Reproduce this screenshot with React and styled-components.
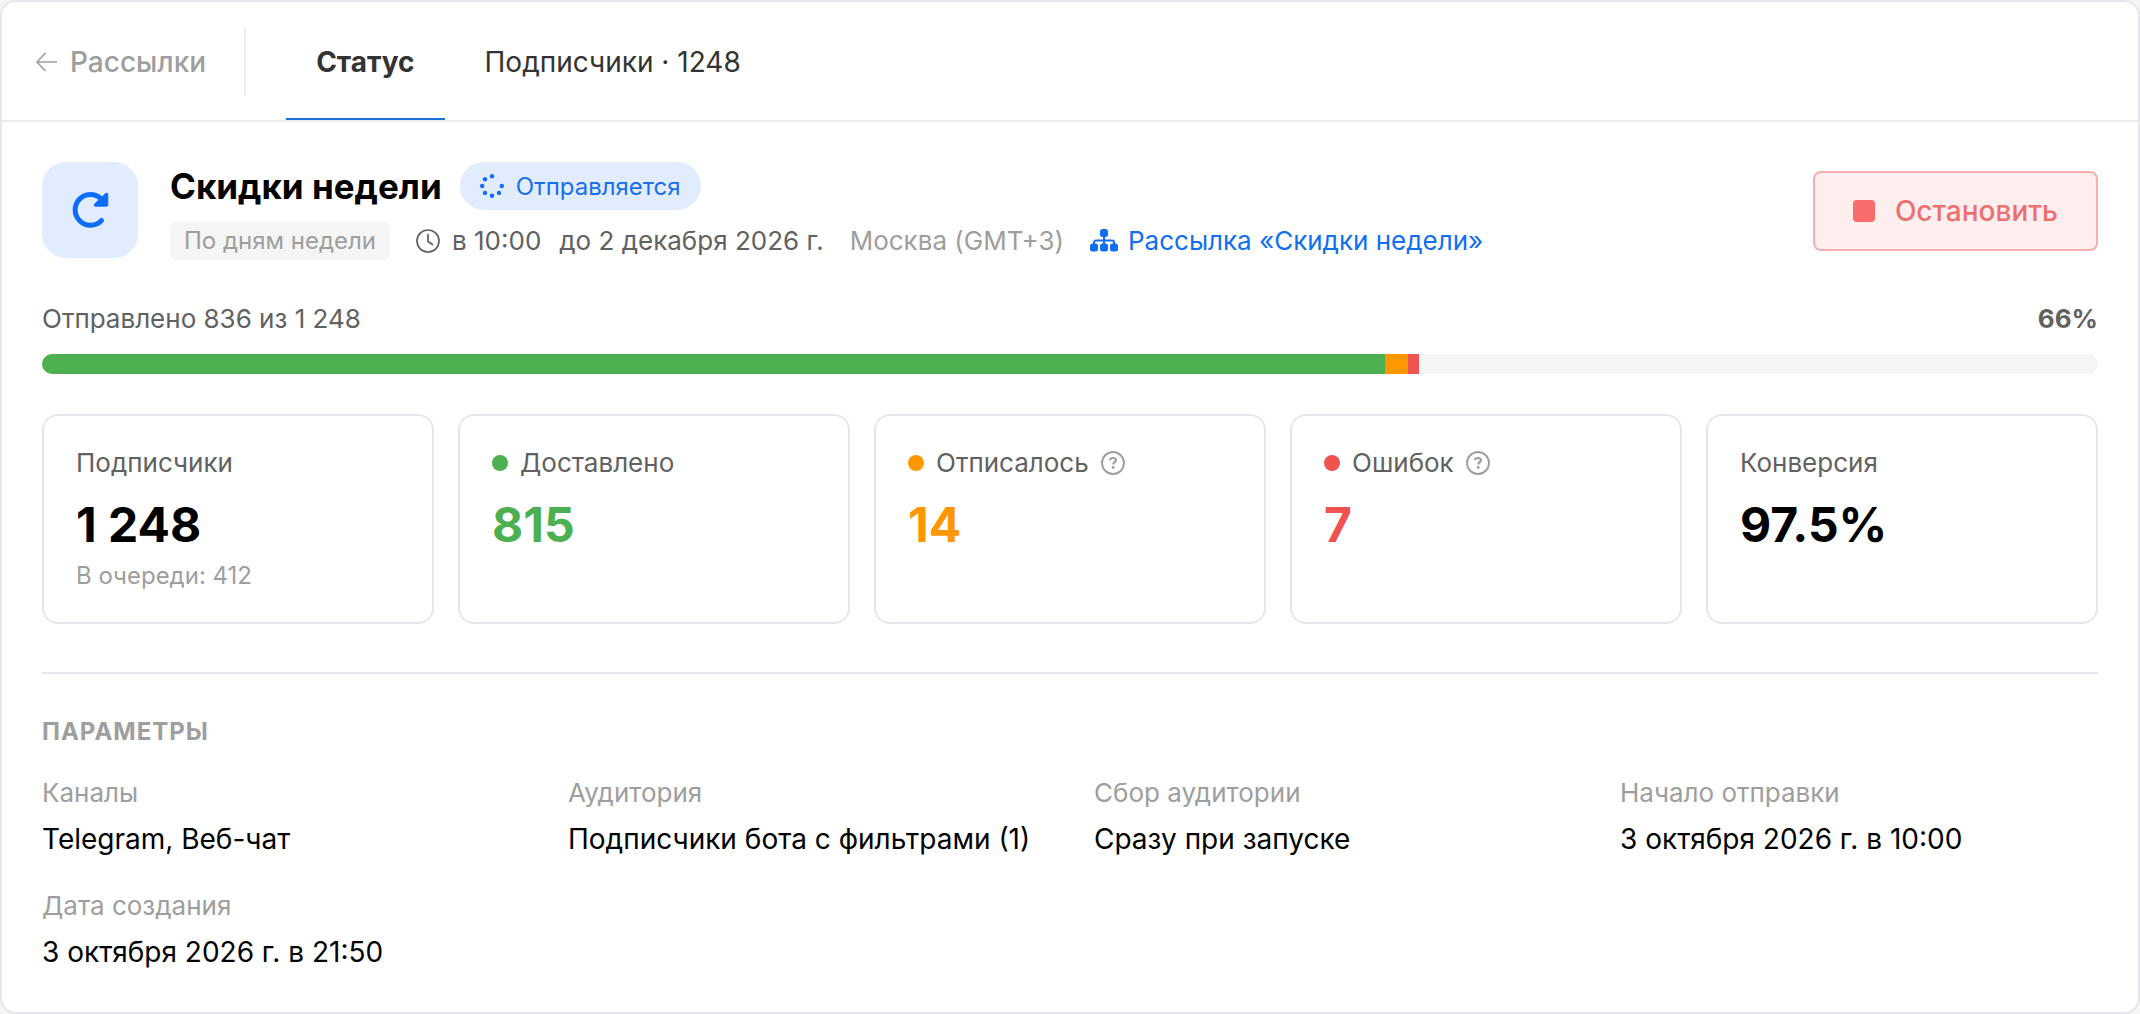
import { useState } from "react";
import styled, { createGlobalStyle } from "styled-components";

const GlobalStyle = createGlobalStyle`
  * {
    box-sizing: border-box;
  }
  body {
    margin: 0;
    background: #f5f5f7;
    font-family: Inter, "Liberation Sans", sans-serif;
    color: #000;
  }
`;

const Panel = styled.main`
  min-height: 100vh;
  background: #fff;
  border: 2px solid #e6e6ee;
  border-radius: 16px;
`;

const Header = styled.header`
  display: flex;
  align-items: stretch;
  height: 120px;
  border-bottom: 2px solid #ededf0;
`;

const BackLink = styled.a`
  display: flex;
  align-items: center;
  gap: 12px;
  margin: 26px 0 24px;
  padding: 0 38px 0 32px;
  border-right: 2px solid #ececf0;
  font-size: 28px;
  font-weight: 500;
  color: #9e9e9e;
  text-decoration: none;
`;

const Tabs = styled.nav`
  display: flex;
  gap: 10px;
  margin-left: 40px;
`;

const Tab = styled.button`
  padding: 4px 30px 0;
  border: none;
  border-bottom: 2px solid ${(props) => (props.$active ? "#1f6fd8" : "transparent")};
  background: none;
  font-family: inherit;
  font-size: 28px;
  font-weight: ${(props) => (props.$active ? 700 : 400)};
  color: #333;
  cursor: pointer;
`;

const Content = styled.div`
  padding: 40px 40px 0;
`;

const Summary = styled.section`
  display: flex;
  align-items: center;
  gap: 32px;
`;

const SummaryIcon = styled.div`
  display: flex;
  align-items: center;
  justify-content: center;
  align-self: flex-start;
  width: 96px;
  height: 96px;
  border-radius: 24px;
  background: #e1edff;
`;

const SummaryText = styled.div`
  display: flex;
  flex: 1;
  flex-direction: column;
  gap: 12px;
`;

const TitleRow = styled.div`
  display: flex;
  align-items: center;
  gap: 18px;
`;

const Title = styled.h1`
  margin: 0;
  font-size: 35px;
  line-height: 48px;
  font-weight: 700;
`;

const StatusBadge = styled.span`
  display: flex;
  align-items: center;
  gap: 12px;
  height: 48px;
  padding: 0 20px;
  border-radius: 24px;
  background: #e1edff;
  font-size: 24px;
  color: #1a6fe8;
`;

const MetaRow = styled.div`
  display: flex;
  align-items: center;
  gap: 26px;
  font-size: 26px;
  line-height: 38px;
  color: #616161;
`;

const Chip = styled.span`
  padding: 0 14px;
  border-radius: 6px;
  background: #f5f5f5;
  font-size: 24px;
  color: #9e9e9e;
`;

const Schedule = styled.span`
  display: flex;
  align-items: center;
  gap: 12px;
`;

const Until = styled.span`
  margin-left: 6px;
`;

const Timezone = styled.span`
  color: #9e9e9e;
`;

const FlowLink = styled.a`
  display: flex;
  align-items: center;
  gap: 10px;
  color: #0f6ff0;
  text-decoration: none;
`;

const StopButton = styled.button`
  display: flex;
  align-items: center;
  gap: 20px;
  height: 80px;
  padding: 0 38px;
  border: 2px solid #f4b0b0;
  border-radius: 8px;
  background: #ffeeee;
  font-family: inherit;
  font-size: 28px;
  font-weight: 500;
  color: #ec7070;
  cursor: pointer;
`;

const StopSquare = styled.span`
  width: 22px;
  height: 22px;
  border-radius: 4px;
  background: #f96b6b;
`;

const ProgressHead = styled.div`
  display: flex;
  justify-content: space-between;
  margin: 40px 0 16px;
  font-size: 26px;
  line-height: 38px;
  color: #616161;
`;

const Percent = styled.span`
  font-weight: 700;
`;

const ProgressTrack = styled.div`
  display: flex;
  height: 20px;
  border-radius: 10px;
  background: #f5f5f5;
  overflow: hidden;
`;

const ProgressPart = styled.div`
  background: ${(props) => props.$color};
`;

const Cards = styled.section`
  display: grid;
  grid-template-columns: repeat(5, 1fr);
  gap: 24px;
  margin-top: 40px;
`;

const Card = styled.article`
  min-height: 210px;
  padding: 28px 32px;
  border: 2px solid #e6e6ee;
  border-radius: 16px;
`;

const CardLabel = styled.div`
  display: flex;
  align-items: center;
  gap: 12px;
  font-size: 26px;
  line-height: 38px;
  color: #616161;
`;

const Dot = styled.span`
  width: 16px;
  height: 16px;
  border-radius: 50%;
  background: ${(props) => props.$color};
`;

const CardValue = styled.div`
  margin-top: 12px;
  font-size: 48px;
  line-height: 62px;
  font-weight: 700;
  color: ${(props) => props.$color || "#000"};
`;

const CardNote = styled.div`
  margin-top: 2px;
  font-size: 24px;
  line-height: 36px;
  color: #9e9e9e;
`;

const Params = styled.section`
  margin-top: 48px;
  padding-top: 40px;
  border-top: 2px solid #e6e6ee;
`;

const ParamsTitle = styled.h2`
  margin: 0 0 24px;
  font-size: 24px;
  line-height: 36px;
  font-weight: 700;
  letter-spacing: 1px;
  color: #9e9e9e;
  text-transform: uppercase;
`;

const ParamsGrid = styled.dl`
  display: grid;
  grid-template-columns: repeat(4, 1fr);
  gap: 28px 48px;
  margin: 0 0 40px;
`;

const ParamName = styled.dt`
  font-size: 26px;
  line-height: 38px;
  color: #9e9e9e;
`;

const ParamValue = styled.dd`
  margin: 7px 0 0;
  font-size: 28px;
  line-height: 40px;
`;

const BackIcon = () => (
  <svg width="24" height="24" viewBox="0 0 24 24" fill="none" stroke="currentColor" strokeWidth="1.6">
    <path d="M23 12H3M11.5 3 3 12l8.500 9" />
  </svg>
);

const RepeatIcon = () => (
  <svg width="40" height="40" viewBox="0 0 40 40" fill="none" stroke="#0d6efd">
    <path d="M31.500 30.500A15.300 15.300 0 1 1 31 8.800" strokeWidth="5" strokeLinecap="round" />
    <path d="M36.500 4.500v10.500h-11z" fill="#0d6efd" strokeWidth="3.500" strokeLinejoin="round" />
  </svg>
);

const SpinnerIcon = () => (
  <svg width="24" height="24" viewBox="0 0 24 24" fill="#0d6efd">
    <circle cx="12" cy="2.200" r="2.200" />
    <circle cx="5" cy="5.200" r="2.200" />
    <circle cx="2.200" cy="12" r="2.200" />
    <circle cx="5" cy="18.900" r="2.200" />
    <circle cx="12" cy="21.800" r="2.200" />
    <circle cx="19" cy="18.900" r="2.200" />
    <circle cx="21.800" cy="12" r="2.200" />
  </svg>
);

const ClockIcon = () => (
  <svg width="24" height="24" viewBox="0 0 24 24" fill="none" stroke="currentColor" strokeWidth="1.700">
    <circle cx="12" cy="12" r="11" />
    <path d="M12 5.500v7l4.500 3" strokeLinecap="round" />
  </svg>
);

const FlowIcon = () => (
  <svg width="28" height="24" viewBox="0 0 28 24" fill="currentColor">
    <rect x="10" y="0" width="8" height="8" rx="2.500" />
    <rect x="0" y="14.500" width="8" height="8" rx="2.500" />
    <rect x="10" y="14.500" width="8" height="8" rx="2.500" />
    <rect x="20" y="14.500" width="8" height="8" rx="2.500" />
    <path
      d="M14 7v9M4 16v-2.500a2 2 0 0 1 2-2h16a2 2 0 0 1 2 2V16"
      fill="none"
      stroke="currentColor"
      strokeWidth="2"
    />
  </svg>
);

const HelpIcon = () => (
  <svg width="24" height="24" viewBox="0 0 24 24" fill="none" stroke="#9e9e9e">
    <circle cx="12" cy="12" r="11" strokeWidth="1.900" />
    <path d="M9 9.300C9.200 6.300 15 6.200 15 9.200c0 2-2.800 2-2.800 4.200" strokeWidth="2.100" />
    <circle cx="12.200" cy="16.500" r="1.400" fill="#9e9e9e" stroke="none" />
  </svg>
);

const progress = [
  { color: "#4caf50", value: 815 },
  { color: "#ff9800", value: 14 },
  { color: "#ef5350", value: 7 },
];
const total = 1248;

const cards = [
  { label: "Подписчики", value: "1 248", note: "В очереди: 412" },
  { label: "Доставлено", value: "815", color: "#4caf50" },
  { label: "Отписалось", value: "14", color: "#ff9800", help: true },
  { label: "Ошибок", value: "7", color: "#ef5350", help: true },
  { label: "Конверсия", value: "97.5%" },
];

const params = [
  ["Каналы", "Telegram, Веб-чат"],
  ["Аудитория", "Подписчики бота с фильтрами (1)"],
  ["Сбор аудитории", "Сразу при запуске"],
  ["Начало отправки", "3 октября 2026 г. в 10:00"],
  ["Дата создания", "3 октября 2026 г. в 21:50"],
];

function App() {
  const [tab, setTab] = useState("status");

  return (
    <>
      <GlobalStyle />
      <Panel>
        <Header>
          <BackLink href="#">
            <BackIcon />
            Рассылки
          </BackLink>
          <Tabs>
            <Tab $active={tab === "status"} onClick={() => setTab("status")}>
              Статус
            </Tab>
            <Tab $active={tab === "subscribers"} onClick={() => setTab("subscribers")}>
              Подписчики · 1248
            </Tab>
          </Tabs>
        </Header>

        <Content>
          <Summary>
            <SummaryIcon>
              <RepeatIcon />
            </SummaryIcon>
            <SummaryText>
              <TitleRow>
                <Title>Скидки недели</Title>
                <StatusBadge>
                  <SpinnerIcon />
                  Отправляется
                </StatusBadge>
              </TitleRow>
              <MetaRow>
                <Chip>По дням недели</Chip>
                <Schedule>
                  <ClockIcon />
                  <span>в 10:00</span>
                  <Until>до 2 декабря 2026 г.</Until>
                </Schedule>
                <Timezone>Москва (GMT+3)</Timezone>
                <FlowLink href="#">
                  <FlowIcon />
                  Рассылка «Скидки недели»
                </FlowLink>
              </MetaRow>
            </SummaryText>
            <StopButton>
              <StopSquare />
              Остановить
            </StopButton>
          </Summary>

          <ProgressHead>
            <span>Отправлено 836 из 1 248</span>
            <Percent>66%</Percent>
          </ProgressHead>
          <ProgressTrack>
            {progress.map((part) => (
              <ProgressPart
                key={part.color}
                $color={part.color}
                style={{ width: `${(part.value / total) * 100}%` }}
              />
            ))}
          </ProgressTrack>

          <Cards>
            {cards.map((card) => (
              <Card key={card.label}>
                <CardLabel>
                  {card.color && <Dot $color={card.color} />}
                  {card.label}
                  {card.help && <HelpIcon />}
                </CardLabel>
                <CardValue $color={card.color}>{card.value}</CardValue>
                {card.note && <CardNote>{card.note}</CardNote>}
              </Card>
            ))}
          </Cards>

          <Params>
            <ParamsTitle>Параметры</ParamsTitle>
            <ParamsGrid>
              {params.map(([name, value]) => (
                <div key={name}>
                  <ParamName>{name}</ParamName>
                  <ParamValue>{value}</ParamValue>
                </div>
              ))}
            </ParamsGrid>
          </Params>
        </Content>
      </Panel>
    </>
  );
}

export default App;
